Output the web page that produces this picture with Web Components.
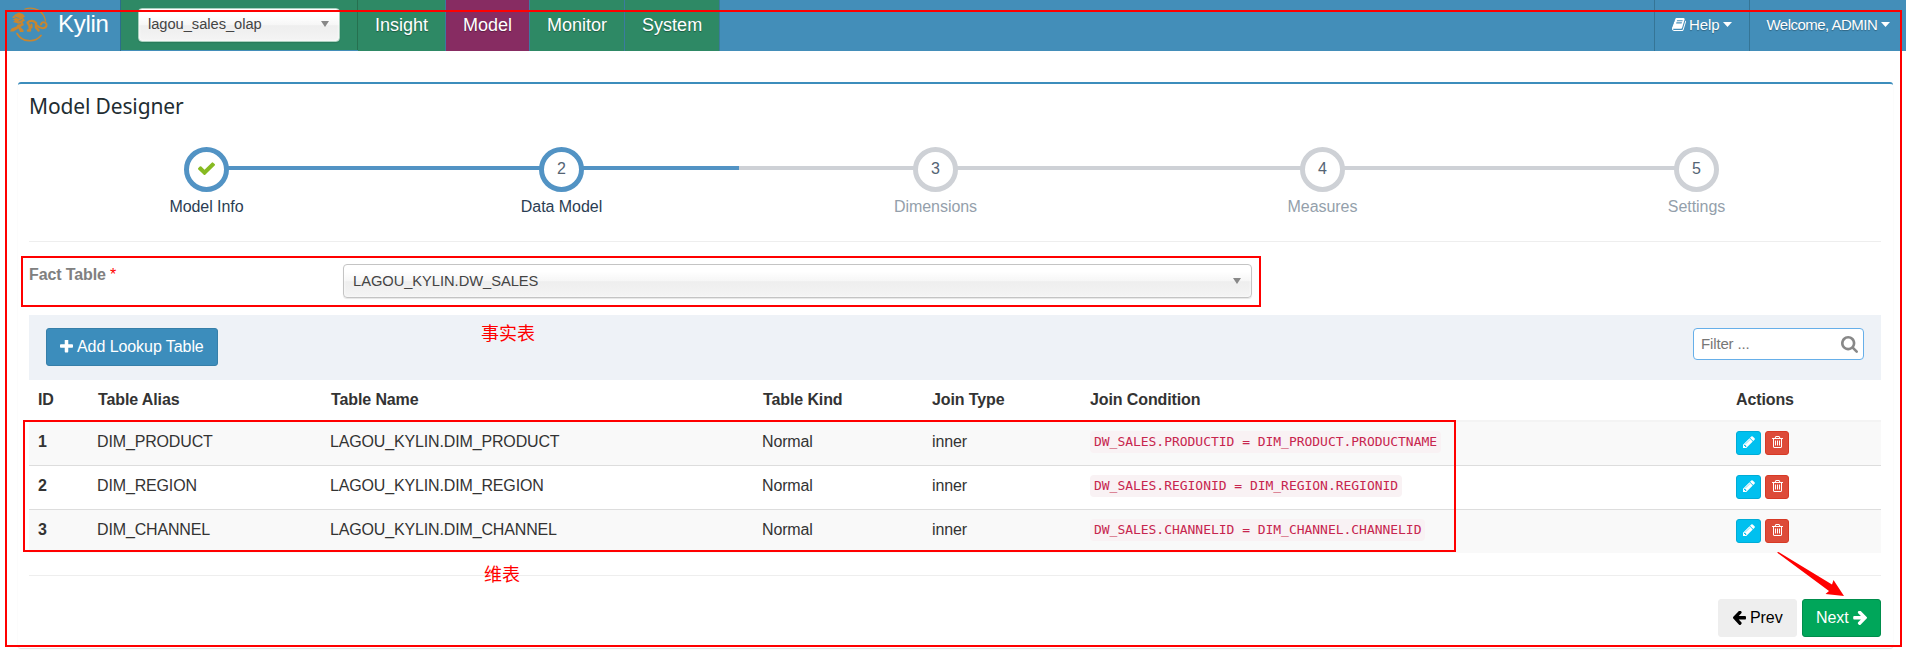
<!DOCTYPE html>
<html lang="en">
<head>
<meta charset="utf-8">
<title>Kylin - Model Designer</title>
<style>
html,body{margin:0;height:652px;overflow:hidden;background:#fff}
body{font-family:"Liberation Sans",Arial,"Noto Sans CJK SC",sans-serif;font-size:16px;color:#333}
</style>
</head>
<body>
<kylin-app></kylin-app>
<script>
const ICONS = {
  plus: ['192 192 1408 1408', 'M1600 736v192q0 40-28 68t-68 28h-416v416q0 40-28 68t-68 28h-192q-40 0-68-28t-28-68v-416h-416q-40 0-68-28t-28-68v-192q0-40 28-68t68-28h416v-416q0-40 28-68t68-28h192q40 0 68 28t28 68v416h416q40 0 68 28t28 68z'],
  pencil: ['128 128 1536 1536', 'M491 1536l91-91-235-235-91 91v107h128v128h107zm523-928q0-22-22-22-10 0-17 7l-542 542q-7 7-7 17 0 22 22 22 10 0 17-7l542-542q7-7 7-17zm-54-192l416 416-832 832h-416v-416zm683 96q0 53-37 90l-166 166-416-416 166-165q36-38 90-38 53 0 91 38l235 234q37 39 37 91z'],
  trash: ['192 128 1408 1536', 'M704 736v576q0 14-9 23t-23 9h-64q-14 0-23-9t-9-23v-576q0-14 9-23t23-9h64q14 0 23 9t9 23zm256 0v576q0 14-9 23t-23 9h-64q-14 0-23-9t-9-23v-576q0-14 9-23t23-9h64q14 0 23 9t9 23zm256 0v576q0 14-9 23t-23 9h-64q-14 0-23-9t-9-23v-576q0-14 9-23t23-9h64q14 0 23 9t9 23zm128 724v-948h-896v948q0 22 7 40.5t14.5 27 10.5 8.5h832q3 0 10.5-8.5t14.5-27 7-40.5zm-672-1076h448l-48-117q-7-9-17-11h-317q-10 2-17 11zm928 32v64q0 14-9 23t-23 9h-96v948q0 83-47 143.5t-113 60.5h-832q-66 0-113-58.5t-47-141.5v-952h-96q-14 0-23-9t-9-23v-64q0-14 9-23t23-9h309l70-167q15-37 54-63t79-26h320q40 0 79 26t54 63l70 167h309q14 0 23 9t9 23z'],
  right: ['106 240 1494 1500', 'M1600 960q0 54-37 91l-651 651q-39 37-91 37-51 0-90-37l-75-75q-38-38-38-91t38-91l293-293h-704q-52 0-84.5-37.5t-32.5-90.5v-128q0-53 32.5-90.5t84.5-37.5h704l-293-294q-38-36-38-90t38-90l75-75q38-38 90-38 53 0 91 38l651 651q37 35 37 90z'],
  left: ['192 240 1472 1500', 'M1664 896v128q0 53-32.5 90.5t-84.5 37.5h-704l293 294q38 36 38 90t-38 90l-75 76q-37 37-90 37-52 0-91-37l-651-652q-37-37-37-90 0-52 37-91l651-650q38-38 91-38 52 0 90 38l75 74q38 38 38 91t-38 91l-293 293h704q52 0 84.5 37.5t32.5 90.5z'],
  check: ['120 300 1552 1223', 'M1671 566q0 40-28 68l-724 724-136 136q-28 28-68 28t-68-28l-136-136-362-362q-28-28-28-68t28-68l136-136q28-28 68-28t68 28l294 295 656-657q28-28 68-28t68 28l136 136q28 28 28 68z'],
  search: ['64 128 1664 1664', 'M1216 832q0-185-131.5-316.5t-316.5-131.5-316.5 131.5-131.5 316.5 131.5 316.5 316.5 131.5 316.5-131.5 131.5-316.5zm512 832q0 52-38 90t-90 38q-54 0-90-38l-343-342q-179 124-399 124-143 0-273.5-55.5t-225-150-150-225-55.5-273.5 55.5-273.5 150-225 225-150 273.5-55.5 273.5 55.5 225 150 150 225 55.5 273.5q0 220-124 399l343 343q37 37 37 90z'],
  book: ['64 128 1664 1536', 'M1703 478q40 57 18 129l-275 906q-19 64-76.5 107.5t-122.5 43.5h-923q-77 0-148.5-53.5t-99.5-131.5q-24-67-2-127 0-4 3-27t4-37q1-8-3-21.5t-3-19.5q2-11 8-21t16.5-23.5 16.5-23.5q23-38 45-91.5t30-91.5q3-10 .5-30t-.5-28q3-11 17-28t17-23q21-36 42-92t25-90q1-9-2.5-32t.5-28q4-13 22-30.5t22-22.5q19-26 42.5-84.5t27.5-96.5q1-8-3-25.5t-2-26.5q2-8 9-18t18-23 17-21q8-12 16.5-30.5t15-35 16-36 19.5-32 26.5-23.5 36-11.5 47.5 5.5l-1 3q38-9 51-9h761q74 0 114 56t18 130l-274 906q-36 119-71.5 153.5t-128.5 34.5h-869q-27 0-38 15-11 16-1 43 24 70 144 70h923q29 0 56-15.5t35-41.5l300-987q7-22 5-57 38 15 59 43zm-1064 2q-4 13 2 22.5t20 9.5h608q13 0 25.5-9.5t16.5-22.5l21-64q4-13-2-22.5t-20-9.5h-608q-13 0-25.5 9.5t-16.5 22.5zm-83 256q-4 13 2 22.5t20 9.5h608q13 0 25.5-9.5t16.5-22.5l21-64q4-13-2-22.5t-20-9.5h-608q-13 0-25.5 9.5t-16.5 22.5z'],
  caret: ['0 0 9 5', 'M0 0h9L4.5 5z']
};

const define = (name, render) => customElements.define(name, class extends HTMLElement {
  connectedCallback() {
    if (!this.shadowRoot) this.attachShadow({ mode: 'open' }).innerHTML = render(this);
  }
});

define('k-icon', el => {
  const [box, d] = ICONS[el.getAttribute('name')];
  return `<style>:host{display:block;flex:none}svg{display:block;width:100%;height:100%;fill:currentColor}</style>
  <svg viewBox="${box}" preserveAspectRatio="none"><path d="${d}"/></svg>`;
});

define('kylin-logo', () => `<style>:host{display:block;width:38px;height:36px}svg{display:block}</style>
<svg width="38" height="36" viewBox="10 6 38 36" fill="none" stroke="#c9862f" stroke-linecap="round" stroke-linejoin="round">
  <path stroke-width="1.300" d="M25 9C34 6 44 11 45.500 21"/>
  <path stroke-width="1.700" d="M17 33.500C22 42.500 35 43 41 35.500"/>
  <path fill="#c9862f" stroke="none" d="M12 17.500L15 14.500L19 12.500L23 14L25 16.500L23 18L25 20.500L22.500 22L24 25L20.500 27L23.500 30V32H20L18.500 28.500L13.500 31.500H10L11.500 28.500L16.500 26.500L18 23.500L13 22L15 20.500L12.500 19.500L15.500 18.500z"/>
  <path stroke="#438eb9" stroke-width=".8" d="M15 17L19 18.500M19 21L22 19.500M17 24.500L20.500 23.500"/>
  <path stroke-width="2.400" d="M28 30.500H30L29.500 26L27.500 22.500C30 20 34 20.500 36 23L36 27.500L38.500 30.500"/>
  <path stroke-width="2" d="M31.500 24.500V27.500M37 25.500C40 29 46 29 46.500 25.500C47 22 42 21 41 24.500"/>
</svg>`);

define('k-select', () => `<style>
:host{display:flex;box-sizing:border-box;align-items:center;justify-content:space-between;border:1px solid #c4c4c4;border-radius:4px;font-size:15px;color:#444;
background:linear-gradient(#fff 20%,#f6f6f6 50%,#eee 52%,#f4f4f4 100%);box-shadow:0 0 3px #fff inset,0 1px 1px rgba(0,0,0,.1)}
k-icon{color:#888;width:8px;height:6px}
</style><span><slot></slot></span><k-icon name="caret"></k-icon>`);

define('nav-item', () => `<style>
:host{display:block;box-sizing:border-box;height:51px;padding:0 17px;border-right:1px solid #3b7ba0;background:#2e8965;font-size:18px;line-height:51px;color:#fff;text-shadow:0 1px 1px rgba(0,0,0,.35)}
:host([active]){background:#872c62}
</style><slot></slot>`);

define('kylin-navbar', () => `<style>
:host{display:flex;height:51px;background:#438eb9;color:#fff}
.brand{display:flex;box-sizing:border-box;width:121px;padding:6px 0 0 10px;border-right:1px solid #2c6d8c}
.brand b{font-weight:400;font-size:24px;line-height:28px;margin:4px 0 0 10px;letter-spacing:-.3px}
.project{box-sizing:border-box;height:50px;width:237px;background:#2e8965;border-right:1px solid #26704f;padding:8px 0 0 17px}
.project k-select{width:202px;height:34px;padding:0 10px 2px 9px;border-color:#aad0be;font-size:14.700px;letter-spacing:-.04px}
.space{flex:1}
.user{display:flex;box-sizing:border-box;height:51px;border-left:1px solid #357596;font-size:15px;line-height:49px;text-shadow:0 1px 1px rgba(0,0,0,.3)}
.help{width:95px;padding-left:17px}.welcome{width:157px;padding-left:17px}
.user span{margin-left:3px;letter-spacing:-.1px}.welcome span{margin-left:-.5px;letter-spacing:-.52px}
.user k-icon{margin-top:18px}
</style>
<div class="brand"><kylin-logo></kylin-logo><b>Kylin</b></div>
<div class="project"><k-select>lagou_sales_olap</k-select></div>
<nav-item>Insight</nav-item><nav-item active>Model</nav-item><nav-item>Monitor</nav-item><nav-item>System</nav-item>
<div class="space"></div>
<div class="user help"><k-icon name="book" style="width:14px;height:13px"></k-icon><span>Help</span><k-icon name="caret" style="width:9px;height:5px;margin:22px 0 0 4px"></k-icon></div>
<div class="user welcome"><span>Welcome, ADMIN</span><k-icon name="caret" style="width:9px;height:5px;margin:22px 0 0 4px"></k-icon></div>`);

define('wizard-step', el => `<style>
:host{display:grid;grid-template-rows:45px 30px;justify-items:center;align-items:center;color:#949fab;
background:linear-gradient(#ced1d6,#ced1d6) var(--from,0) 19px/var(--span,100%) 4px no-repeat}
:host([reached]){--c:#5293c4;color:#2b3d53;background-image:linear-gradient(#5293c4,#5293c4)}
:host([first]){--from:100%;--span:50%}:host([last]){--from:0;--span:50%}
i{display:grid;place-items:center;box-sizing:border-box;width:45px;height:45px;border:5px solid var(--c,#ced1d6);border-radius:50%;background:#fff;color:#546474;font-style:normal;line-height:18px;padding-bottom:2px}
k-icon{color:#87ba21;width:17px;height:13px}
span{line-height:18px;padding-bottom:1px;letter-spacing:-.05px}
</style><i>${el.hasAttribute('done') ? '<k-icon name="check"></k-icon>' : el.getAttribute('n')}</i><span><slot></slot></span>`);

define('k-button', () => `<style>
:host{display:flex;box-sizing:border-box;align-items:center;height:38px;border:1px solid #367fa9;border-radius:3px;background:#3c8dbc;color:#fff;font-size:16px;line-height:20px;padding:0 13px;gap:4px;letter-spacing:-.07px}
:host([kind=prev]){width:79px;background:#eee;border-color:#eee;color:#000;padding:0 0 0 14px}
:host([kind=next]){width:79px;background:#00a65a;border-color:#008d4c;padding:0 0 0 13px}
:host([kind=edit]),:host([kind=del]){height:24px;padding:0;justify-content:center;width:25px;background:#00c0ef;border-color:#00acd6}
:host([kind=del]){width:24px;background:#dd4b39;border-color:#d73925}
</style><slot></slot>`);

define('lookup-row', el => `<style>
:host{display:grid;grid-template-columns:59px 233px 432px 170px 159px 646px 1fr;box-sizing:border-box;height:44px;border-top:1px solid #ddd;padding-top:8px;line-height:24px}
:host([odd]){background:#f9f9f9}
:host([first]){height:45px;border-top:2px solid #f4f4f4}
div{padding-left:9px;white-space:nowrap;letter-spacing:-.15px}b{color:#333}
div.c,div.act{padding-left:8px}
code{display:block;width:max-content;font:13px/21px "DejaVu Sans Mono",monospace;letter-spacing:-.03px;color:#c7254e;background:#f9f2f4;border-radius:4px;padding:0 4px;margin-top:1px;height:22px}
.act{display:flex;gap:4px;padding-top:1px}
</style><div><b>${el.getAttribute('n')}</b></div><div>${el.getAttribute('alias')}</div><div>LAGOU_KYLIN.${el.getAttribute('alias')}</div><div>Normal</div><div>inner</div><div class="c"><code>${el.getAttribute('cond')}</code></div>
<div class="act"><k-button kind="edit"><k-icon name="pencil" style="width:12px;height:12px;margin-bottom:2px"></k-icon></k-button><k-button kind="del"><k-icon name="trash" style="width:11px;height:12px;margin-bottom:2px"></k-icon></k-button></div>`);

define('lookup-table', () => `<style>
:host{display:block}
.head{display:grid;grid-template-columns:59px 233px 432px 170px 159px 646px 1fr;height:40px;font-weight:700;line-height:40px;letter-spacing:-.11px}
.head div{padding-left:8px}.head .s{padding-left:10px}
</style><div class="head"><div style="padding-left:9px">ID</div><div class="s">Table Alias</div><div class="s">Table Name</div><div class="s">Table Kind</div><div style="padding-left:9px">Join Type</div><div>Join Condition</div><div>Actions</div></div>
<lookup-row first odd n="1" alias="DIM_PRODUCT" cond="DW_SALES.PRODUCTID = DIM_PRODUCT.PRODUCTNAME"></lookup-row>
<lookup-row n="2" alias="DIM_REGION" cond="DW_SALES.REGIONID = DIM_REGION.REGIONID"></lookup-row>
<lookup-row odd n="3" alias="DIM_CHANNEL" cond="DW_SALES.CHANNELID = DIM_CHANNEL.CHANNELID"></lookup-row>`);

define('model-panel', () => `<style>
:host{display:block;box-sizing:border-box;margin:31px 13px 0 18px;height:566px;border-top:2px solid #3c8dbc;border-radius:3px;padding:0 12px 0 11px;box-shadow:0 1px 1px rgba(0,0,0,.12)}
h3{margin:0;height:63px;box-sizing:border-box;padding-top:7px;font:400 21px/30px "Noto Sans",sans-serif;letter-spacing:-.14px;color:#222d32}
.steps{display:grid;grid-template-columns:355px 355px 393px 381px 367px;height:94px;align-content:start}
.fact{display:flex;border-top:1px solid #eee;height:74px;box-sizing:border-box;font-weight:700;color:#808080}
.fact label{width:314px;padding-top:22px;line-height:22px;letter-spacing:-.12px}
.fact label em{color:#f00;font:400 16px/20px "Liberation Sans"}
.fact k-select{width:909px;height:34px;margin-top:22px;padding:0 10px 1px 9px;font-weight:400;font-size:14.700px;letter-spacing:-.04px}
.bar{display:flex;justify-content:space-between;align-items:flex-start;height:65px;box-sizing:border-box;padding:13px 17px;background:#eef2f7}
.filter{display:flex;justify-content:space-between;align-items:center;box-sizing:border-box;width:171px;height:32px;border:1px solid #66afe9;border-radius:4px;background:#fff;color:#777;padding:0 5px 0 7px;font-size:15px;letter-spacing:-.15px}
.filter span{margin-bottom:2px}
.filter k-icon{color:#888;width:17px;height:17px}
.foot{display:flex;justify-content:flex-end;gap:5px;border-top:1px solid #eee;margin-top:22px;padding-top:23px}
</style>
<h3>Model Designer</h3>
<div class="steps"><wizard-step done reached first>Model Info</wizard-step><wizard-step reached n="2">Data Model</wizard-step><wizard-step n="3">Dimensions</wizard-step><wizard-step n="4">Measures</wizard-step><wizard-step last n="5">Settings</wizard-step></div>
<div class="fact"><label>Fact Table <em>*</em></label><k-select>LAGOU_KYLIN.DW_SALES</k-select></div>
<div class="bar"><k-button><k-icon name="plus" style="width:13px;height:13px;margin-bottom:1px"></k-icon>Add Lookup Table</k-button>
<div class="filter"><span>Filter ...</span><k-icon name="search"></k-icon></div></div>
<lookup-table></lookup-table>
<div class="foot"><k-button kind="prev"><k-icon name="left" style="width:13px;height:14px"></k-icon>Prev</k-button><k-button kind="next">Next<k-icon name="right" style="width:14px;height:14px"></k-icon></k-button></div>`);

/* Red boxes, arrow and captions lying over the page */
define('note-layer', () => `<style>
:host{position:absolute;inset:0;pointer-events:none;color:#f00;font:18px/24px "Noto Sans CJK SC",sans-serif}
svg{position:absolute;left:0;top:0}span{position:absolute}
</style><svg width="1906" height="652" fill="none" stroke="#f00" stroke-width="2">
<path d="M6 11H1901V646H6zM22 257H1260V306H22zM24 421H1455V551H24z"/>
<path fill="#f00" stroke="none" d="M1777 552.500L1778.500 552L1832 584.500L1833.500 580L1844 596L1825.500 594L1829 591z"/></svg>
<span style="left:481px;top:320px">事实表</span><span style="left:484px;top:561px">维表</span>`);

define('kylin-app', () => `<style>:host{display:block;position:relative;width:1906px;height:652px}</style>
<kylin-navbar></kylin-navbar><model-panel></model-panel><note-layer></note-layer>`);
</script>
</body>
</html>
